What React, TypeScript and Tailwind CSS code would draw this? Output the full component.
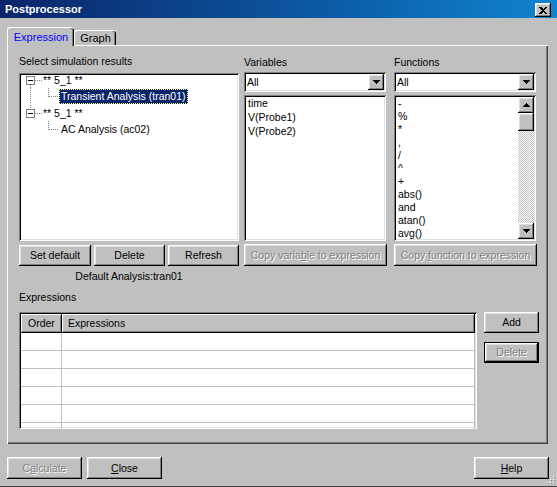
import React from 'react';

const raised =
  'shadow-[inset_-1px_-1px_#000000,inset_1px_1px_#ffffff,inset_-2px_-2px_#808080,inset_2px_2px_#dfdfdf]';
const sunken =
  'shadow-[inset_1px_1px_#808080,inset_-1px_-1px_#ffffff,inset_2px_2px_#000000,inset_-2px_-2px_#dfdfdf]';
const headerCell = 'shadow-[inset_-1px_-1px_#000000,inset_1px_1px_#ffffff,inset_-2px_-2px_#808080]';

interface ButtonProps {
  children: React.ReactNode;
  disabled?: boolean;
  className?: string;
}

const Button: React.FC<ButtonProps> = ({ children, disabled, className = '' }) => (
  <button
    type="button"
    className={`${raised} bg-[#c0c0c0] flex items-center justify-center leading-none ${
      disabled ? 'text-[#808080] [text-shadow:1px_1px_0_#ffffff]' : 'text-black'
    } ${className}`}
  >
    {children}
  </button>
);

const ArrowDown = () => (
  <svg width="7" height="4" viewBox="0 0 7 4" shapeRendering="crispEdges">
    <polygon points="0,0 7,0 3.5,4" fill="#000" />
  </svg>
);

const ArrowUp = () => (
  <svg width="7" height="4" viewBox="0 0 7 4" shapeRendering="crispEdges">
    <polygon points="0,4 7,4 3.5,0" fill="#000" />
  </svg>
);

const Combo = () => (
  <div className={`${sunken} bg-white h-[20px] flex items-center pl-[3px] pr-[2px]`}>
    <span className="flex-1 leading-none">All</span>
    <div className={`${raised} bg-[#c0c0c0] w-[16px] h-[16px] flex items-center justify-center`}>
      <ArrowDown />
    </div>
  </div>
);

// one row of the tree: the gutter svg draws the dotted connectors and the +/- box
const TreeGutter: React.FC<{ kind: 'parent-first' | 'child-mid' | 'parent-last' | 'child-last' }> = ({ kind }) => {
  const dot = { stroke: '#808080', strokeWidth: 1, strokeDasharray: '1 1' };
  const isParent = kind === 'parent-first' || kind === 'parent-last';
  const w = isParent ? 22 : 38;
  return (
    <svg width={w} height="16" viewBox={`0 0 ${w} 16`} shapeRendering="crispEdges" className="shrink-0">
      {kind === 'parent-first' && <line x1="9.5" y1="13" x2="9.5" y2="16" {...dot} />}
      {kind === 'parent-last' && <line x1="9.5" y1="0" x2="9.5" y2="4" {...dot} />}
      {kind === 'child-mid' && <line x1="9.5" y1="0" x2="9.5" y2="16" {...dot} />}
      {isParent && (
        <>
          <rect x="5.5" y="4.5" width="8" height="8" fill="#fff" stroke="#808080" />
          <line x1="7" y1="8.5" x2="12" y2="8.5" stroke="#000" />
          <line x1="14" y1="8.5" x2="21" y2="8.5" {...dot} />
        </>
      )}
      {!isParent && (
        <>
          <line x1="27.5" y1="0" x2="27.5" y2="8.5" {...dot} />
          <line x1="27.5" y1="8.5" x2="37" y2="8.5" {...dot} />
        </>
      )}
    </svg>
  );
};

const Tree = () => (
  <div className={`${sunken} bg-white h-[168px] p-[2px]`}>
    <div className="-mt-[3px]">
      <div className="flex items-center h-[16px]">
        <TreeGutter kind="parent-first" />
        <span className="leading-none">** 5_1 **</span>
      </div>
      <div className="flex items-center h-[16px]">
        <TreeGutter kind="child-mid" />
        <span className="bg-[#0a246a] text-white leading-[15px] px-[2px] outline outline-1 outline-dotted outline-[#ffff80] -outline-offset-1">
          Transient Analysis (tran01)
        </span>
      </div>
      <div className="flex items-center h-[16px] mt-[1px]">
        <TreeGutter kind="parent-last" />
        <span className="leading-none">** 5_1 **</span>
      </div>
      <div className="flex items-center h-[16px]">
        <TreeGutter kind="child-last" />
        <span className="leading-none px-[2px]">AC Analysis (ac02)</span>
      </div>
    </div>
  </div>
);

const functions = ['-', '%', '*', ',', '/', '^', '+', 'abs()', 'and', 'atan()', 'avg()'];
const variables = ['time', 'V(Probe1)', 'V(Probe2)'];

const FunctionList = () => (
  <div className={`${sunken} bg-white h-[146px] p-[2px] flex`}>
    <div className="flex-1 pl-[2px] overflow-hidden">
      {functions.map((f, i) => (
        <div key={i} className="h-[13px] leading-[13px]">
          {f}
        </div>
      ))}
    </div>
    <div className="w-[16px] flex flex-col">
      <div className={`${raised} bg-[#c0c0c0] h-[16px] flex items-center justify-center`}>
        <ArrowUp />
      </div>
      <div className={`${raised} bg-[#c0c0c0] h-[18px]`} />
      <div className="flex-1 bg-[repeating-conic-gradient(#c0c0c0_0%_25%,#ffffff_0%_50%)] bg-[length:2px_2px]" />
      <div className={`${raised} bg-[#c0c0c0] h-[16px] flex items-center justify-center`}>
        <ArrowDown />
      </div>
    </div>
  </div>
);

const VariableList = () => (
  <div className={`${sunken} bg-white h-[146px] p-[2px] pl-[4px]`}>
    {variables.map((v) => (
      <div key={v} className="h-[14px] leading-[13px]">
        {v}
      </div>
    ))}
  </div>
);

const ExpressionTable = () => (
  <div className={`${sunken} bg-white w-[458px] h-[117px] p-[2px] overflow-hidden`}>
    <div className="flex h-[19px] bg-[#c0c0c0]">
      <div className={`${headerCell} w-[41px] pl-[7px] flex items-center`}>Order</div>
      <div className={`${headerCell} flex-1 pl-[6px] flex items-center`}>Expressions</div>
    </div>
    {[0, 1, 2, 3, 4, 5].map((r) => (
      <div key={r} className="flex h-[18px] border-b border-[#c0c0c0]">
        <div className="w-[41px] border-r border-[#c0c0c0]" />
        <div className="flex-1 border-r border-[#c0c0c0]" />
      </div>
    ))}
  </div>
);

export default function App() {
  return (
    <div className="relative w-[557px] h-[487px] bg-[#c0c0c0] overflow-hidden border-b border-[#404040] font-['Liberation_Sans',Arial,sans-serif] text-[10.5px] text-black select-none">
      {/* title bar */}
      <div className="h-[18px] flex items-center justify-between pl-[5px] pr-[6px] bg-linear-to-r from-[#0a246a] to-[#1084d0]">
        <span className="text-white font-bold text-[11px] leading-none">Postprocessor</span>
        <div className={`${raised} bg-[#c0c0c0] w-[16px] h-[14px] mt-[2px] flex items-center justify-center`}>
          <svg width="8" height="7" viewBox="0 0 8 7" shapeRendering="crispEdges">
            <path d="M0 0h2l2 2 2-2h2L5 3.5 8 7H6L4 5 2 7H0l3-3.5z" fill="#000" />
          </svg>
        </div>
      </div>

      {/* tabs */}
      <div className="relative z-10 flex items-end h-[19px] ml-[7px] mt-[9px]">
        <div className="h-[19px] w-[67px] bg-[#c0c0c0] rounded-t-[3px] border-l border-t border-white shadow-[inset_-1px_0_#000000,inset_-2px_0_#808080] flex items-start justify-center pt-[4px]">
          <span className="text-[#0000ff] text-[11px] leading-none">Expression</span>
        </div>
        <div className="h-[15px] w-[42px] mb-[1px] rounded-t-[3px] border-l border-t border-white shadow-[inset_-1px_0_#000000,inset_-2px_0_#808080] flex items-start justify-center pt-[2px]">
          <span className="text-[11px] leading-none">Graph</span>
        </div>
      </div>

      {/* tab panel */}
      <div className="w-[541px] h-[399px] ml-[7px] -mt-[1px] shadow-[inset_1px_1px_#ffffff,inset_-1px_-1px_#404040,inset_-2px_-2px_#808080] pl-[12px] pt-[10px]">
        <div className="flex items-start">
          <div className="w-[220px]">
            <div className="h-[18px] leading-[13px]">Select simulation results</div>
            <Tree />
            <div className="flex gap-[3px] mt-[4px]">
              <Button className="w-[72px] h-[21px]">Set default</Button>
              <Button className="w-[71px] h-[21px]">Delete</Button>
              <Button className="w-[71px] h-[21px]">Refresh</Button>
            </div>
            <div className="mt-[4px] leading-[13px] text-center">Default Analysis:tran01</div>
          </div>

          <div className="w-[142px] ml-[5px]">
            <div className="h-[17px] leading-[13px] pt-[1px]">Variables</div>
            <Combo />
            <div className="mt-[3px]">
              <VariableList />
            </div>
            <Button disabled className="w-[143px] h-[22px] mt-[3px]">
              <span>
                Copy varia<u>b</u>le to expression
              </span>
            </Button>
          </div>

          <div className="w-[142px] ml-[8px]">
            <div className="h-[17px] leading-[13px] pt-[1px]">Functions</div>
            <Combo />
            <div className="mt-[3px]">
              <FunctionList />
            </div>
            <Button disabled className="w-[143px] h-[22px] mt-[3px]">
              <span>
                Copy <u>f</u>unction to expression
              </span>
            </Button>
          </div>
        </div>

        <div className="mt-[8px] leading-[13px]">Expressions</div>

        <div className="flex items-start mt-[8px]">
          <ExpressionTable />
          <div className="ml-[7px] flex flex-col">
            <Button className="w-[55px] h-[21px]">Add</Button>
            <div className="mt-[9px] border border-black">
              <Button disabled className="w-[53px] h-[19px]">
                Delete
              </Button>
            </div>
          </div>
        </div>
      </div>

      {/* bottom buttons */}
      <div className="flex items-center mt-[13px] pl-[7px] pr-[8px]">
        <Button disabled className="w-[75px] h-[22px]">
          <span>
            C<u>a</u>lculate
          </span>
        </Button>
        <Button className="w-[75px] h-[22px] ml-[5px]">
          <span>
            <u>C</u>lose
          </span>
        </Button>
        <Button className="w-[75px] h-[22px] ml-auto">
          <span>
            <u>H</u>elp
          </span>
        </Button>
      </div>

      {/* size grip */}
      <svg className="absolute right-[1px] bottom-[1px]" width="11" height="11" viewBox="0 0 11 11" shapeRendering="crispEdges">
        {[
          [8, 2],
          [5, 5],
          [8, 5],
          [2, 8],
          [5, 8],
          [8, 8],
        ].map(([x, y], i) => (
          <g key={i}>
            <rect x={x} y={y} width="1" height="1" fill="#ffffff" />
            <rect x={x + 1} y={y + 1} width="1" height="1" fill="#808080" />
          </g>
        ))}
      </svg>
    </div>
  );
}
